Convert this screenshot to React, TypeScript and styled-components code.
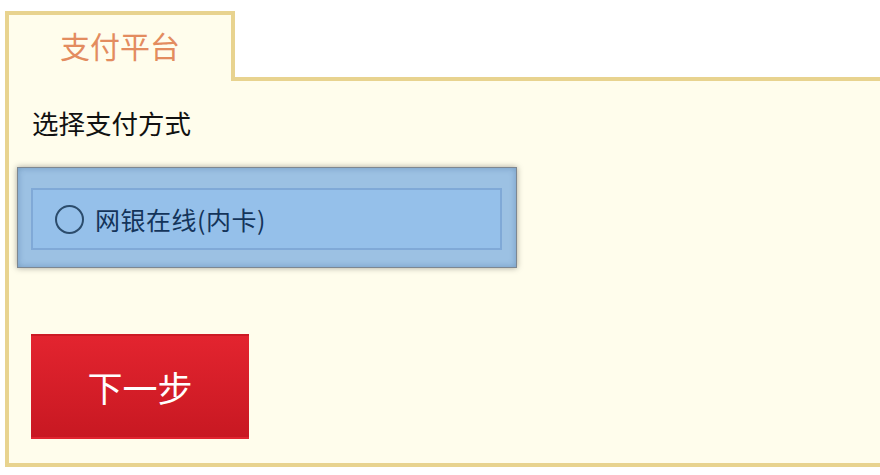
import React from "react";
import styled, { createGlobalStyle } from "styled-components";

const Global = createGlobalStyle`
  html, body { margin: 0; padding: 0; background: #ffffff; overflow: hidden; }
  body { font-family: "Noto Sans CJK SC", "Noto Sans", sans-serif; }
`;

const Page = styled.div`
  padding: 11px 0 0 5px;
  display: flex;
  flex-direction: column;
  align-items: flex-start;
`;

const Tab = styled.div`
  position: relative;
  z-index: 1;
  box-sizing: border-box;
  width: 230px;
  height: 70px;
  margin-bottom: -4px;
  border: 4px solid #e8d38f;
  border-bottom: none;
  background: #fffdec;
  display: flex;
  justify-content: center;
  padding-top: 12px;
  color: #e38c5f;
  font-size: 30px;
  line-height: 36px;
`;

const Box = styled.div`
  box-sizing: border-box;
  width: 900px;
  border: 4px solid #e8d38f;
  border-right: none;
  background: #fffdec;
  padding: 27px 0 24px 0;
  display: flex;
  flex-direction: column;
  align-items: flex-start;
`;

const Title = styled.div`
  margin-left: 23px;
  font-size: 26.5px;
  line-height: 30px;
  color: #111111;
`;

const Panel = styled.div`
  box-sizing: border-box;
  margin: 29px 0 0 8px;
  width: 500px;
  height: 101px;
  border: 1px solid #7d8791;
  background: #9cc1e3;
  box-shadow: 0 0 6px rgba(0, 0, 0, 0.35), inset 0 0 6px rgba(40, 80, 130, 0.35);
  padding: 20px 14px 16px 13px;
`;

const Option = styled.label`
  box-sizing: border-box;
  height: 62px;
  width: 100%;
  border: 2px solid #80a9d7;
  background: #95c0ea;
  display: flex;
  align-items: center;
  padding-left: 22px;
  gap: 11px;
  color: #14345a;
  font-size: 25px;
  letter-spacing: 0.5px;
  cursor: pointer;
`;

const Radio = styled.span`
  box-sizing: border-box;
  width: 29px;
  height: 29px;
  border-radius: 50%;
  border: 2px solid #2c4c6c;
  flex: none;
`;

const NextButton = styled.button`
  margin: 66px 0 0 22px;
  width: 218px;
  height: 105px;
  border: none;
  border-top: 2px solid #cc1a24;
  border-bottom: 2px solid #e02530;
  background: linear-gradient(#e3242f, #c81822);
  color: #ffffff;
  font-family: "Noto Sans CJK SC", "Noto Sans", sans-serif;
  font-size: 35px;
  padding: 0;
  cursor: pointer;
`;

export default function App() {
  return (
    <>
      <Global />
      <Page>
        <Tab>支付平台</Tab>
        <Box>
          <Title>选择支付方式</Title>
          <Panel>
            <Option>
              <Radio />
              网银在线(内卡)
            </Option>
          </Panel>
          <NextButton>下一步</NextButton>
        </Box>
      </Page>
    </>
  );
}
